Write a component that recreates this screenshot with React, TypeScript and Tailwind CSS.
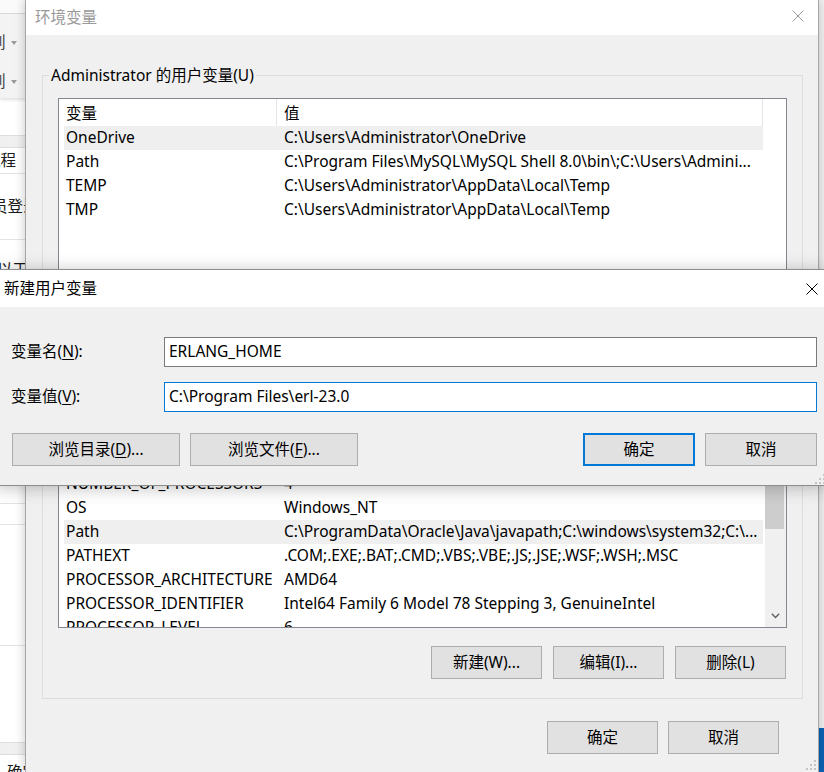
import type { ReactNode } from "react";

const font = "font-['Noto_Sans','Noto_Sans_CJK_SC',sans-serif]";

type Row = [string, string];

const userVars: Row[] = [
  ["OneDrive", "C:\\Users\\Administrator\\OneDrive"],
  ["Path", "C:\\Program Files\\MySQL\\MySQL Shell 8.0\\bin\\;C:\\Users\\Admini..."],
  ["TEMP", "C:\\Users\\Administrator\\AppData\\Local\\Temp"],
  ["TMP", "C:\\Users\\Administrator\\AppData\\Local\\Temp"],
];

const systemVars: Row[] = [
  ["ComSpec", "C:\\windows\\system32\\cmd.exe"],
  ["DriverData", "C:\\Windows\\System32\\Drivers\\DriverData"],
  ["NUMBER_OF_PROCESSORS", "4"],
  ["OS", "Windows_NT"],
  ["Path", "C:\\ProgramData\\Oracle\\Java\\javapath;C:\\windows\\system32;C:\\..."],
  ["PATHEXT", ".COM;.EXE;.BAT;.CMD;.VBS;.VBE;.JS;.JSE;.WSF;.WSH;.MSC"],
  ["PROCESSOR_ARCHITECTURE", "AMD64"],
  ["PROCESSOR_IDENTIFIER", "Intel64 Family 6 Model 78 Stepping 3, GenuineIntel"],
  ["PROCESSOR_LEVEL", "6"],
  ["PROCESSOR_REVISION", "4e03"],
];

function CloseIcon({ className = "" }: { className?: string }) {
  return (
    <svg width="12" height="12" viewBox="0 0 12 12" className={className}>
      <path d="M0.5 0.5L11.5 11.5M11.5 0.5L0.5 11.5" stroke="currentColor" strokeWidth="1" fill="none" />
    </svg>
  );
}

// size grip in the bottom-right corner of a sizable window
function Grip({ className = "" }: { className?: string }) {
  return (
    <svg width="10" height="10" viewBox="0 0 10 10" className={className}>
      <g fill="#c4c4c4">
        <rect x="8" y="0" width="2" height="2" />
        <rect x="4" y="4" width="2" height="2" />
        <rect x="8" y="4" width="2" height="2" />
        <rect x="0" y="8" width="2" height="2" />
        <rect x="4" y="8" width="2" height="2" />
        <rect x="8" y="8" width="2" height="2" />
      </g>
    </svg>
  );
}

function Btn({ children, w, primary = false }: { children: ReactNode; w: string; primary?: boolean }) {
  return (
    <div
      className={`flex h-[33px] shrink-0 items-center justify-center bg-[#e1e1e1] ${w} ${
        primary ? "border-2 border-[#0078d7]" : "border border-[#adadad]"
      }`}
    >
      {children}
    </div>
  );
}

function VarList({ rows, selected, scrollbar = false, className = "" }: { rows: Row[]; selected: number; scrollbar?: boolean; className?: string }) {
  return (
    <div className={`flex overflow-hidden border border-[#828790] bg-white ${className}`}>
      <div className="flex w-[704px] shrink-0 flex-col overflow-hidden pl-[5px]">
        <div className="flex h-[27px] shrink-0">
          <div className="flex w-[213px] shrink-0 items-center border-r border-[#e5e5e5] pl-[2px] pt-[3px]">变量</div>
          <div className="flex w-[486px] shrink-0 items-center border-r border-[#e5e5e5] pl-[7px] pt-[3px]">值</div>
        </div>
        {rows.map(([name, value], i) => (
          <div key={name + i} className={`flex h-[24px] shrink-0 items-center ${i === selected ? "bg-[#efefef]" : ""}`}>
            <div className="w-[213px] shrink-0 overflow-hidden whitespace-nowrap pl-[2px]">{name}</div>
            <div className="w-[486px] shrink-0 overflow-hidden whitespace-nowrap pl-[7px]">{value}</div>
          </div>
        ))}
      </div>
      {scrollbar && (
        <div className="ml-auto flex w-[21px] shrink-0 flex-col bg-[#f0f0f0]">
          <div className="h-[17px] shrink-0" />
          <div className="h-[115px] w-[19px] shrink-0 bg-[#cdcdcd]" />
          <div className="flex-1" />
          <div className="flex h-[22px] shrink-0 items-center justify-center">
            <svg width="9" height="6" viewBox="0 0 9 6">
              <path d="M0.8 0.8L4.5 4.5L8.2 0.8" stroke="#606060" strokeWidth="1.4" fill="none" />
            </svg>
          </div>
        </div>
      )}
    </div>
  );
}

function BackgroundApp() {
  return (
    <div className="absolute left-0 top-0 flex h-[772px] w-[140px] flex-col overflow-hidden bg-white text-[#1a1a1a]">
      <div className="h-[14px] shrink-0 border-b border-[#d9d9d9] bg-[#fafafa]" />
      <div className="flex h-[84px] shrink-0 flex-col bg-[#f3f3f3] shadow-[0_2px_3px_rgba(0,0,0,0.12)]">
        {["mt-[17px]", "mt-[15px]"].map((m) => (
          <div key={m} className={`flex h-[24px] items-center text-[#444] ${m}`}>
            <span className="ml-[-10px]">列</span>
            <span className="ml-[5px] h-0 w-0 border-x-[3px] border-t-[4px] border-x-transparent border-t-[#9a9a9a]" />
          </div>
        ))}
      </div>
      <div className="h-[37px] shrink-0" />
      <div className="h-[13px] shrink-0 border-y border-[#dedede] bg-[#f0f0f0]" />
      <div className="flex h-[26px] shrink-0 items-center border-b border-[#e3e3e3]">
        <span className="ml-[-15px] whitespace-nowrap">流程</span>
      </div>
      <div className="flex h-[66px] shrink-0 items-center border-b border-[#e3e3e3]">
        <span className="ml-[-8px] whitespace-nowrap">员登录</span>
      </div>
      <div className="h-[264px] shrink-0 border-b border-[#e3e3e3] pt-[18px]">
        <span className="ml-[-3px] whitespace-nowrap">以工作</span>
      </div>
      <div className="h-[21px] shrink-0 border-b border-[#e3e3e3]" />
      <div className="h-[121px] shrink-0 border-b border-[#e3e3e3]" />
      <div className="h-[96px] shrink-0" />
      <div className="h-[13px] shrink-0 border-y border-[#dedede] bg-[#f0f0f0]" />
      <div className="pl-[7px] pt-[6px] whitespace-nowrap">确定</div>
    </div>
  );
}

function EnvWindow() {
  return (
    <div className="absolute left-[25px] top-0 flex h-[773px] w-[794px] flex-col border-x border-[#a6a6a6] bg-[#f0f0f0] shadow-[0_0_10px_rgba(0,0,0,0.22)]">
      <div className="flex h-[35px] shrink-0 items-center bg-white pl-[9px] pr-[14px] text-[#999999]">
        <span>环境变量</span>
        <CloseIcon className="mb-[3px] ml-auto" />
      </div>

      <fieldset className="ml-[16px] mr-[15px] mt-[30px] border border-[#dcdcdc] px-[15px] pb-[19px]">
        <legend className="ml-[-9px] px-[2px] leading-[20px]">Administrator 的用户变量(U)</legend>
        <VarList rows={userVars} selected={0} className="mt-[13px] h-[192px]" />
        <div className="mt-[18px] flex justify-end gap-[11px] pr-[1px]">
          <Btn w="w-[111px]">新建(N)...</Btn>
          <Btn w="w-[111px]">编辑(E)...</Btn>
          <Btn w="w-[111px]">删除(D)</Btn>
        </div>
      </fieldset>

      <fieldset className="ml-[16px] mr-[15px] mt-[3px] border border-[#dcdcdc] px-[15px] pb-[19px]">
        <legend className="ml-[-9px] px-[2px] leading-[20px]">系统变量(S)</legend>
        <VarList rows={systemVars} selected={4} scrollbar className="mt-[12px] h-[232px]" />
        <div className="mt-[18px] flex justify-end gap-[11px] pr-[1px]">
          <Btn w="w-[111px]">新建(W)...</Btn>
          <Btn w="w-[111px]">编辑(I)...</Btn>
          <Btn w="w-[111px]">删除(L)</Btn>
        </div>
      </fieldset>

      <div className="mt-[22px] flex justify-end gap-[10px] pr-[39px]">
        <Btn w="w-[111px]">确定</Btn>
        <Btn w="w-[111px]">取消</Btn>
      </div>
      <Grip className="absolute bottom-[3px] right-[2px]" />
    </div>
  );
}

function NewVarDialog() {
  return (
    <div className="absolute left-[-4px] top-[269px] flex h-[217px] w-[831px] flex-col border border-[#8c8c8c] bg-[#f0f0f0] shadow-[0_2px_16px_rgba(0,0,0,0.25)]">
      <div className="flex h-[37px] shrink-0 items-center bg-white pl-[7px] pr-[8px]">
        <span>新建用户变量</span>
        <CloseIcon className="ml-auto" />
      </div>
      <div className="flex flex-1 flex-col pl-[14px] pr-[9px] pt-[30px]">
        <div className="flex items-center">
          <div className="w-[153px] shrink-0">
            变量名(<span className="underline underline-offset-2">N</span>):
          </div>
          <div className="flex h-[30px] flex-1 items-center border border-[#7a7a7a] bg-white pl-[4px]">ERLANG_HOME</div>
        </div>
        <div className="mt-[15px] flex items-center">
          <div className="w-[153px] shrink-0">
            变量值(<span className="underline underline-offset-2">V</span>):
          </div>
          <div className="flex h-[30px] flex-1 items-center border border-[#0078d7] bg-white pl-[4px]">
            C:\Program Files\erl-23.0
          </div>
        </div>
        <div className="mt-[21px] flex gap-[10px] pl-[1px]">
          <Btn w="w-[168px]">
            浏览目录(<span className="underline underline-offset-2">D</span>)...
          </Btn>
          <Btn w="w-[168px]">
            浏览文件(<span className="underline underline-offset-2">F</span>)...
          </Btn>
          <div className="flex-1" />
          <Btn w="w-[112px]" primary>
            确定
          </Btn>
          <Btn w="w-[112px]">取消</Btn>
        </div>
      </div>
      <Grip className="absolute bottom-[1px] right-[1px]" />
    </div>
  );
}

export default function App() {
  return (
    <div className={`relative h-[772px] w-[824px] overflow-hidden bg-[#f2f2f2] text-[15.5px] text-black ${font}`}>
      <BackgroundApp />
      <div className="absolute right-0 top-[728px] h-[44px] w-[6px] bg-[#0b63b6]" />
      <EnvWindow />
      <NewVarDialog />
    </div>
  );
}
